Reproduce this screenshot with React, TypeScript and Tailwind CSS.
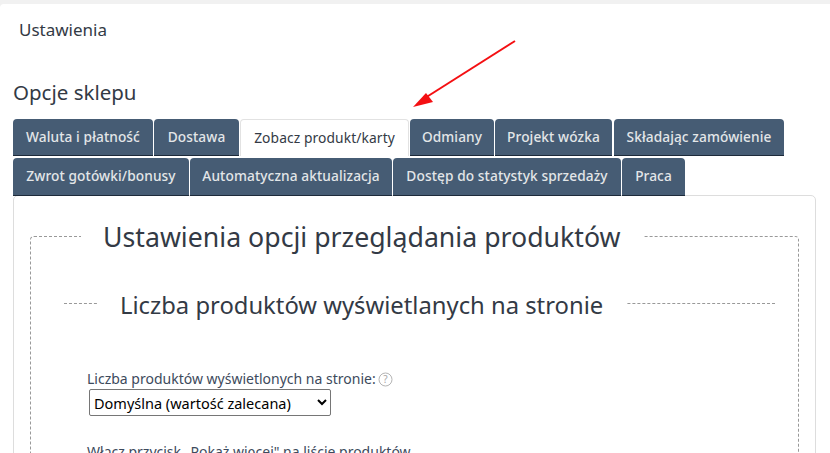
const font = { fontFamily: '"Noto Sans", sans-serif' };

const rowOne = [
  { label: "Waluta i płatność", width: "w-[140px]" },
  { label: "Dostawa", width: "w-[85px]" },
  { label: "Zobacz produkt/karty", width: "w-[169px]", active: true },
  { label: "Odmiany", width: "w-[84px]" },
  { label: "Projekt wózka", width: "w-[117px]" },
  { label: "Składając zamówienie", width: "w-[170px] ml-px" },
];

const rowTwo = [
  { label: "Zwrot gotówki/bonusy", width: "w-[176px]" },
  { label: "Automatyczna aktualizacja", width: "w-[202px]" },
  { label: "Dostęp do statystyk sprzedaży", width: "w-[228px]" },
  { label: "Praca", width: "w-[63px]" },
];

type TabProps = { label: string; width: string; active?: boolean };

const Tab = ({ label, width, active }: TabProps) => {
  if (active) {
    return (
      <div className={`${width} h-full flex items-center justify-center rounded-t-[4px] border border-b-0 border-[#e2e2e2] bg-white text-[13.8px] tracking-[0.1px] text-[#333a45] whitespace-nowrap`}>
        {label}
      </div>
    );
  }
  return (
    <div className={`${width} h-full flex items-center justify-center rounded-t-[4px] border-b border-[#1d2a3a] bg-[#465c74] text-[13.7px] font-medium tracking-[0.1px] text-[#e3e6e8] whitespace-nowrap`}>
      {label}
    </div>
  );
};

export default function App() {
  return (
    <div style={font} className="relative h-[453px] w-[830px] overflow-hidden bg-[#f1f1f1] pt-1">
      <div className="h-full rounded-tl-[4px] bg-white pl-[13px] pr-[14px]">
        <div className="pl-[6px] pt-[16px] text-[17px] leading-5 text-[#333a45]">Ustawienia</div>

        <h1 className="mt-[39px] text-[20.5px] leading-[26px] text-[#333a45]">Opcje sklepu</h1>

        <div className="mt-[14px] flex h-[37px] gap-px">
          {rowOne.map((tab) => (
            <Tab key={tab.label} {...tab} />
          ))}
        </div>
        <div className="mt-[2px] flex h-[38px] gap-px">
          {rowTwo.map((tab) => (
            <Tab key={tab.label} {...tab} />
          ))}
        </div>

        <div className="-mt-px h-[400px] rounded-[5px] border border-[#dddddd] px-4 pt-[22px]">
          <fieldset className="rounded-[4px] border border-dashed border-[#999999] pl-[33px] pr-[23px] pb-10">
            <legend className="ml-[17px] pl-[22px] pr-[23px] pt-[2px] text-[26.7px] leading-[34px] -mt-[2px] text-[#333a45] whitespace-nowrap">
              Ustawienia opcji przeglądania produktów
            </legend>

            <fieldset className="mt-[33px] border-0 border-t border-dashed border-[#999999]">
              <legend className="ml-[33px] px-[23px] pt-[3px] text-[23.8px] leading-[30px] text-[#333a45] whitespace-nowrap">
                Liczba produktów wyświetlanych na stronie
              </legend>

              <div className="ml-[23px] mt-[50px] flex items-center text-[14px] leading-[18px] text-[#3d4a5c]">
                Liczba produktów wyświetlonych na stronie:
                <svg className="ml-[2px]" width="15" height="15" viewBox="0 0 15 15" fill="none">
                  <circle cx="7.5" cy="7.5" r="6.5" stroke="#b5b5b5" />
                  <text x="7.5" y="11" textAnchor="middle" fontSize="10" fill="#a8a8a8">?</text>
                </svg>
              </div>

              <select className="ml-[25px] mt-[1px] block h-[27px] w-[242px] rounded-[2px] border border-[#767676] bg-white text-[14.5px] text-black">
                <option>Domyślna (wartość zalecana)</option>
              </select>

              <div className="ml-[23px] mt-[27px] text-[14px] leading-[18px] text-[#3d4a5c] whitespace-nowrap">
                Włącz przycisk „Pokaż więcej" na liście produktów
              </div>
            </fieldset>
          </fieldset>
        </div>
      </div>

      {/* red arrow pasted over the tabs */}
      <svg className="absolute left-[405px] top-[35px]" width="120" height="80" viewBox="0 0 120 80" fill="none">
        <path d="M110 6 L20 63" stroke="#f40f12" strokeWidth="2" />
        <path d="M8 72 L21 58 L28 67 Z" fill="#f40f12" />
      </svg>
    </div>
  );
}
